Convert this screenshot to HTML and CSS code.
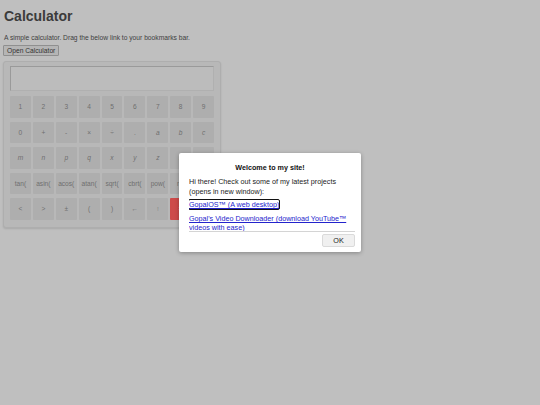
FILE: index.html
```html
<!DOCTYPE html>
<html>
<head>
<meta charset="utf-8">
<title>Calculator</title>
<link rel="stylesheet" href="styles.css">
</head>
<body>
<h1 class="title">Calculator</h1>
<p class="intro">A simple calculator. Drag the below link to your bookmarks bar.</p>
<button class="open-btn">Open Calculator</button>
<div class="calc">
  <div class="display"></div>
  <div class="keys">
    <span class="key">1</span><span class="key">2</span><span class="key">3</span><span class="key">4</span><span class="key">5</span><span class="key">6</span><span class="key">7</span><span class="key">8</span><span class="key">9</span>
    <span class="key">0</span><span class="key">+</span><span class="key">-</span><span class="key">×</span><span class="key">÷</span><span class="key">.</span><span class="key var">a</span><span class="key var">b</span><span class="key var">c</span>
    <span class="key var">m</span><span class="key var">n</span><span class="key var">p</span><span class="key var">q</span><span class="key var">x</span><span class="key var">y</span><span class="key var">z</span><span class="key var">s</span><span class="key var">t</span>
    <span class="key">tan(</span><span class="key">asin(</span><span class="key">acos(</span><span class="key">atan(</span><span class="key">sqrt(</span><span class="key">cbrt(</span><span class="key">pow(</span><span class="key">n<sup>th</sup></span><span class="key">log(</span>
    <span class="key">&lt;</span><span class="key">&gt;</span><span class="key">±</span><span class="key">(</span><span class="key">)</span><span class="key">←</span><span class="key">↑</span><span class="key eq">=</span><span class="key">C</span>
  </div>
</div>

<div class="dialog">
  <div class="dialog-title">Welcome to my site!</div>
  <div class="dialog-body">
    <p class="dialog-text">Hi there! Check out some of my latest projects (opens in new window):</p>
    <p class="dialog-link"><a href="#" class="focused">GopalOS™ (A web desktop)</a></p>
    <p class="dialog-link"><a href="#">Gopal's Video Downloader (download YouTube™ videos with ease)</a></p>
  </div>
  <div class="dialog-foot">
    <button class="ok-btn">OK</button>
  </div>
</div>
</body>
</html>
```
FILE: styles.css
```css
html, body {
  margin: 0;
  background: #bfbfbf;
  font-family: "Liberation Sans", Arial, sans-serif;
  color: #3d3d3d;
}
body {
  padding: 7px 3px 0 3px;
  height: 398px;
  position: relative;
  overflow: hidden;
}
.title {
  font-size: 14px;
  font-weight: bold;
  margin: 0 0 0 1px;
  line-height: 19px;
  color: #3b3b3b;
}
.intro {
  font-size: 6.7px;
  margin: 7px 0 0 1px;
  line-height: 9px;
  color: #404040;
}
.open-btn {
  margin: 3px 0 0 0;
  font-family: "Liberation Sans", Arial, sans-serif;
  font-size: 6.7px;
  height: 11px;
  padding: 0 3px;
  line-height: 9px;
  background: #b5b5b5;
  border: 1px solid #8f8f8f;
  border-radius: 1px;
  color: #333;
  display: block;
}
.calc {
  margin-top: 5px;
  width: 204px;
  padding: 4px 6px 7px 6px;
  background: #b8b8b8;
  border: 1px solid #aeaeae;
  border-radius: 3px;
  box-shadow: 0 1px 2px rgba(0,0,0,0.12);
}
.display {
  height: 23px;
  background: #bcbcbc;
  border: 1.5px solid #9a9a9a;
  border-right-color: #b0b0b0;
  border-bottom-color: #b0b0b0;
}
.keys {
  margin-top: 5px;
  display: grid;
  grid-template-columns: repeat(9, 1fr);
  grid-auto-rows: 21.5px;
  column-gap: 2px;
  row-gap: 4px;
}
.key {
  background: #aeaeae;
  border-radius: 1px;
  display: flex;
  align-items: center;
  justify-content: center;
  font-size: 6.6px;
  color: #6e6e6e;
  white-space: nowrap;
  overflow: hidden;
}
.key sup {
  font-size: 4.5px;
}
.key.var {
  font-style: italic;
}
.key.eq {
  background: #cd4a4a;
  color: #eee;
}
.dialog {
  position: absolute;
  left: 179px;
  top: 153px;
  width: 166px;
  padding: 10px 6px 5px 10px;
  background: #ffffff;
  border-radius: 2px;
  box-shadow: 0 1px 4px rgba(0,0,0,0.3);
  color: #111;
}
.dialog-title {
  font-size: 7.2px;
  font-weight: bold;
  text-align: center;
  line-height: 10px;
  margin-left: -4px;
}
.dialog-body {
  height: 54px;
  overflow: hidden;
  border-bottom: 1px solid #d4d4d4;
  margin-top: 4px;
}
.dialog-text {
  margin: 0;
  font-size: 7.2px;
  line-height: 9.5px;
  color: #222;
}
.dialog-link {
  margin: 4px 0 0 0;
  font-size: 7.2px;
  line-height: 9px;
}
.dialog-link + .dialog-link {
  margin-top: 5px;
}
.dialog-link a {
  color: #2323cc;
  text-decoration: underline;
}
.dialog-link a.focused {
  outline: 1.5px solid #111;
  outline-offset: 0;
  border-radius: 1px;
}
.dialog-foot {
  display: flex;
  justify-content: flex-end;
  padding-top: 2px;
}
.ok-btn {
  font-family: "Liberation Sans", Arial, sans-serif;
  font-size: 7.2px;
  width: 33px;
  height: 13px;
  padding: 0;
  background: #f0f0f0;
  border: 1px solid #dadada;
  border-radius: 2px;
  color: #222;
}
```
